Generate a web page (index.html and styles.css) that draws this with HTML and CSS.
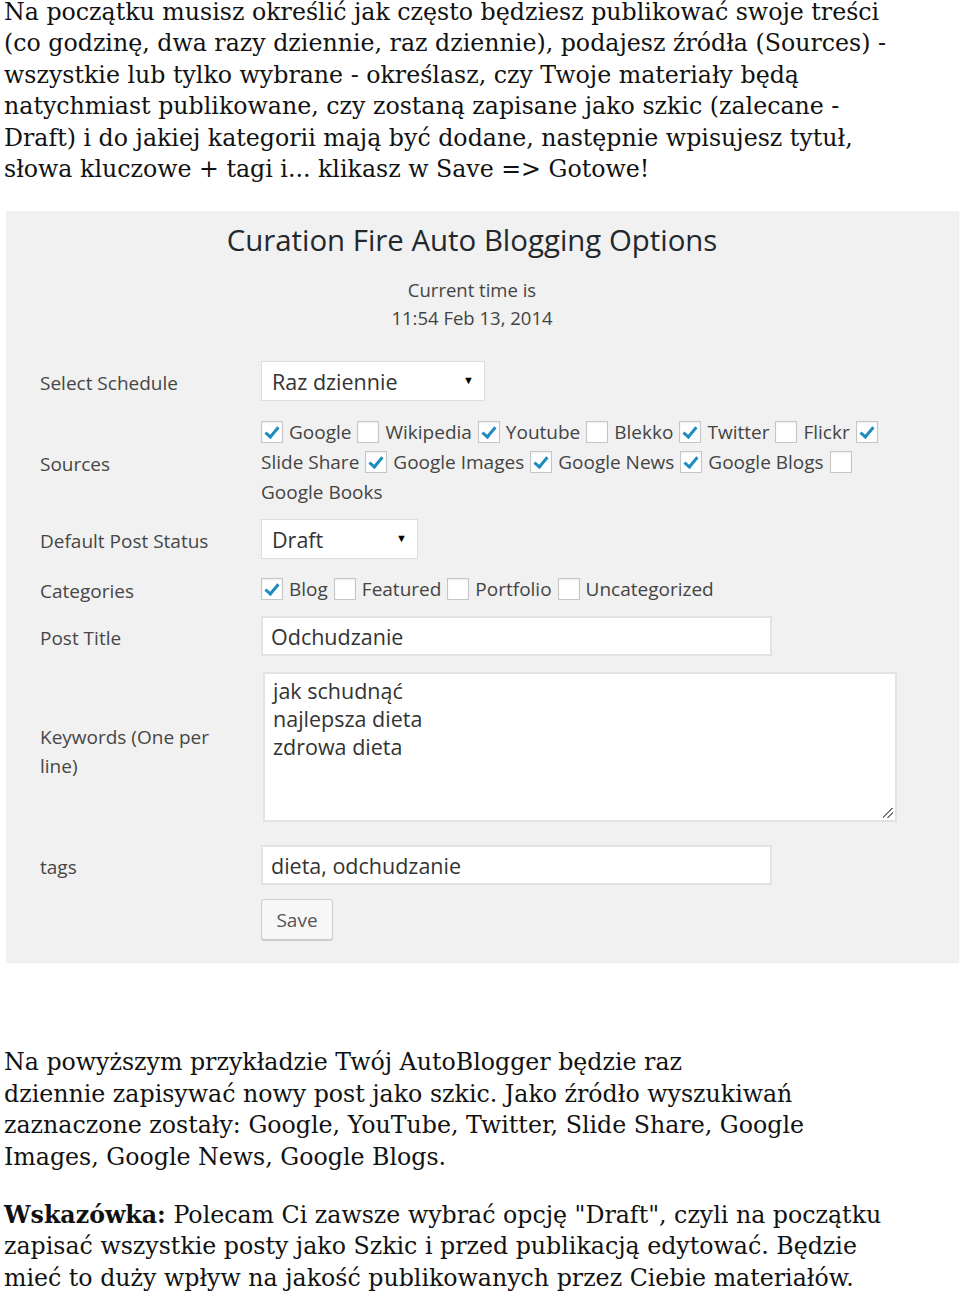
FILE: index.html
```html
<!DOCTYPE html>
<html lang="pl">
<head>
<meta charset="utf-8">
<title>Curation Fire Auto Blogging Options</title>
<link rel="stylesheet" href="styles.css">
</head>
<body>
<p class="text intro">Na początku musisz określić jak często będziesz publikować swoje treści<br>(co godzinę, dwa razy dziennie, raz dziennie), podajesz źródła (Sources) -<br>wszystkie lub tylko wybrane - określasz, czy Twoje materiały będą<br>natychmiast publikowane, czy zostaną zapisane jako szkic (zalecane -<br>Draft) i do jakiej kategorii mają być dodane, następnie wpisujesz tytuł,<br>słowa kluczowe + tagi i... klikasz w Save =&gt; Gotowe!</p>

<div class="panel">
  <h2 class="title">Curation Fire Auto Blogging Options</h2>
  <div class="time">Current time is<br>11:54 Feb 13, 2014</div>

  <div class="form">
    <div class="row row-schedule">
      <div class="label">Select Schedule</div>
      <div class="select select-wide"><span>Raz dziennie</span><span class="arrow">▼</span></div>
    </div>

    <div class="row row-sources">
      <div class="label">Sources</div>
      <div class="checks">
        <span class="cb on"></span><span class="opt">Google</span>
        <span class="cb"></span><span class="opt">Wikipedia</span>
        <span class="cb on"></span><span class="opt">Youtube</span>
        <span class="cb"></span><span class="opt">Blekko</span>
        <span class="cb on"></span><span class="opt">Twitter</span>
        <span class="cb"></span><span class="opt">Flickr</span>
        <span class="cb on"></span><span class="opt">Slide Share</span>
        <span class="cb on"></span><span class="opt">Google Images</span>
        <span class="cb on"></span><span class="opt">Google News</span>
        <span class="cb on"></span><span class="opt">Google Blogs</span>
        <span class="cb"></span><span class="opt">Google Books</span>
      </div>
    </div>

    <div class="row row-status">
      <div class="label">Default Post Status</div>
      <div class="select select-narrow"><span>Draft</span><span class="arrow">▼</span></div>
    </div>

    <div class="row row-cats">
      <div class="label">Categories</div>
      <div class="checks">
        <span class="cb on"></span><span class="opt">Blog</span>
        <span class="cb"></span><span class="opt">Featured</span>
        <span class="cb"></span><span class="opt">Portfolio</span>
        <span class="cb"></span><span class="opt">Uncategorized</span>
      </div>
    </div>

    <div class="row row-title">
      <div class="label">Post Title</div>
      <div class="input">Odchudzanie</div>
    </div>

    <div class="row row-keywords">
      <div class="label label-kw">Keywords (One per<br>line)</div>
      <div class="textarea">jak schudnąć<br>najlepsza dieta<br>zdrowa dieta<span class="grip"></span></div>
    </div>

    <div class="row row-tags">
      <div class="label">tags</div>
      <div class="input">dieta, odchudzanie</div>
    </div>

    <div class="row row-save">
      <div class="label"></div>
      <div><span class="button">Save</span></div>
    </div>
  </div>
</div>

<p class="text after">Na powyższym przykładzie Twój AutoBlogger będzie raz<br>dziennie zapisywać nowy post jako szkic. Jako źródło wyszukiwań<br>zaznaczone zostały: Google, YouTube, Twitter, Slide Share, Google<br>Images, Google News, Google Blogs.</p>
<p class="text tip"><b>Wskazówka:</b> Polecam Ci zawsze wybrać opcję "Draft", czyli na początku<br>zapisać wszystkie posty jako Szkic i przed publikacją edytować. Będzie<br>mieć to duży wpływ na jakość publikowanych przez Ciebie materiałów.</p>
</body>
</html>
```

FILE: styles.css
```css
html, body {
  margin: 0;
  padding: 0;
  background: #ffffff;
}

body {
  width: 960px;
  overflow: hidden;
}

.text {
  font-family: "DejaVu Serif", "Liberation Serif", serif;
  font-size: 23.7px;
  line-height: 31.4px;
  color: #111111;
  margin: 0;
  padding-left: 4px;
  white-space: nowrap;
}

.intro {
  margin-top: -3px;
}

.after {
  margin-top: 85px;
}

.tip {
  margin-top: 27px;
}

.tip b {
  font-weight: bold;
}

.panel {
  margin: 26px 2px 0 6px;
  background: #f1f1f1;
  box-shadow: 1px 1px 1px rgba(0, 0, 0, 0.08);
  font-family: "Open Sans", "Noto Sans", sans-serif;
  color: #444444;
  padding: 10px 20px 22px 0;
}

.title {
  margin: 0;
  font-weight: 400;
  font-size: 29.4px;
  line-height: 38px;
  text-align: center;
  color: #23282d;
}

.time {
  margin-top: 17px;
  font-size: 18.5px;
  line-height: 28px;
  text-align: center;
  color: #444444;
}

.form {
  padding-left: 34px;
  margin-top: 29px;
}

.row {
  display: grid;
  grid-template-columns: 221px 1fr;
  align-items: center;
  font-size: 19px;
}

.label {
  font-size: 19px;
  line-height: 29px;
  color: #464646;
  padding-top: 5px;
}

.label-kw {
  padding-top: 10px;
}

.select {
  box-sizing: border-box;
  height: 40px;
  background: #ffffff;
  border: 1px solid #dddddd;
  display: flex;
  align-items: center;
  justify-content: space-between;
  padding: 0 10px 0 10px;
  font-size: 21.5px;
  color: #333333;
}

.select-wide { width: 224px; }
.select-narrow { width: 157px; }

.arrow {
  font-size: 11px;
  color: #000000;
  margin-top: -4px;
}

.row-sources { margin-top: 20px; }
.row-status { margin-top: 16px; }
.row-cats { margin-top: 13px; }
.row-title { margin-top: 10px; }
.row-keywords { margin-top: 16px; }
.row-tags { margin-top: 23px; }
.row-save { margin-top: 14px; }

.checks {
  display: flex;
  flex-wrap: wrap;
  align-items: center;
  row-gap: 8px;
  column-gap: 6px;
  width: 630px;
  font-size: 19px;
  line-height: 22px;
  color: #444444;
}

.cb {
  box-sizing: border-box;
  width: 22px;
  height: 22px;
  background: #ffffff;
  border: 1px solid #c6c6c6;
  box-shadow: inset 0 1px 2px rgba(0, 0, 0, 0.08);
  position: relative;
}

.cb.on::after {
  content: "";
  position: absolute;
  left: 6px;
  top: 2px;
  width: 5px;
  height: 11px;
  border: solid #1e8cbe;
  border-width: 0 3px 3px 0;
  transform: rotate(40deg);
}

.input {
  box-sizing: border-box;
  width: 511px;
  height: 40px;
  background: #ffffff;
  border: 2px solid #e3e3e3;
  padding: 0 8px;
  display: flex;
  align-items: center;
  font-size: 21.5px;
  color: #333333;
}

.textarea {
  box-sizing: border-box;
  width: 634px;
  height: 150px;
  margin-left: 2px;
  background: #ffffff;
  border: 2px solid #e3e3e3;
  padding: 3px 8px;
  font-size: 21.5px;
  line-height: 28px;
  color: #333333;
  position: relative;
}

.grip {
  position: absolute;
  right: 2px;
  bottom: 2px;
  width: 10px;
  height: 10px;
  background:
    linear-gradient(135deg, transparent 45%, #777 45%, #777 55%, transparent 55%, transparent 70%, #777 70%, #777 80%, transparent 80%);
}

.button {
  display: inline-flex;
  box-sizing: border-box;
  width: 72px;
  height: 41px;
  align-items: center;
  justify-content: center;
  background: #f7f7f7;
  border: 1px solid #cccccc;
  border-radius: 3px;
  box-shadow: 0 1px 0 #cccccc;
  font-size: 19px;
  color: #555555;
}
```
